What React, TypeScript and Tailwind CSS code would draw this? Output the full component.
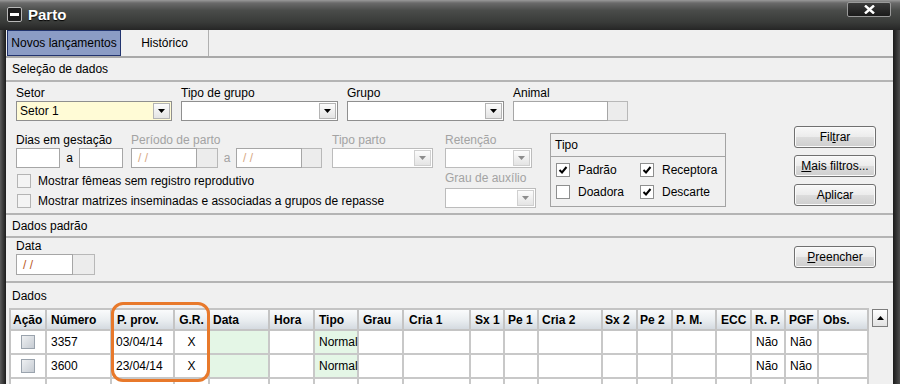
import React from "react"

function Arrow({ disabled = false }: { disabled?: boolean }) {
  return (
    <svg width="7" height="4" viewBox="0 0 7 4">
      <polygon points="0,0 7,0 3.5,4" fill={disabled ? "#8c8c8c" : "#000"} />
    </svg>
  )
}

function Label({ children, grey = false }: { children: React.ReactNode; grey?: boolean }) {
  return <div className={`h-[15px] leading-[15px] whitespace-nowrap ${grey ? "text-[#a3a3a3]" : "text-black"}`}>{children}</div>
}

function Combo({ className = "", value = "", disabled = false, yellow = false }: { className?: string; value?: string; disabled?: boolean; yellow?: boolean }) {
  return (
    <div className={`${className} h-[20px] flex border ${disabled ? "border-[#bcbcbc]" : "border-[#8f8f8f]"} ${yellow ? "bg-[#fffbd6]" : "bg-white"}`}>
      <div className="flex-1 pl-[3px] leading-[18px] whitespace-nowrap">{value}</div>
      <div className={`m-[1px] w-[17px] border ${disabled ? "border-[#d0d0d0]" : "border-[#b4b4b4]"} bg-gradient-to-b from-[#fcfcfc] to-[#e4e4e4] flex items-center justify-center`}>
        <Arrow disabled={disabled} />
      </div>
    </div>
  )
}

function DateField({ inputW, btnW, h = "h-[20px]", disabled = false }: { inputW: string; btnW: string; h?: string; disabled?: boolean }) {
  return (
    <div className={`flex ${h}`}>
      <div className={`${inputW} border border-[#a6a6a6] bg-white pl-[6px] flex items-center ${disabled ? "text-[#d8a884]" : "text-[#b8581d]"}`}>/ /</div>
      <div className={`${btnW} border border-l-0 border-[#b8b8b8] bg-[#ececec]`} />
    </div>
  )
}

function Check({ checked = false, grey = false }: { checked?: boolean; grey?: boolean }) {
  return (
    <div className={`w-[14px] h-[14px] border flex items-center justify-center ${grey ? "border-[#b4b4b4] bg-[#f4f4f4]" : "border-[#8e8f8f] bg-white"}`}>
      {checked && (
        <svg width="10" height="10" viewBox="0 0 10 10">
          <path d="M1.5 5 L4 7.5 L8.5 2" stroke="#000" strokeWidth="2" fill="none" />
        </svg>
      )}
    </div>
  )
}

function Btn({ children }: { children: React.ReactNode }) {
  return (
    <div className="w-[82px] h-[22px] rounded-[3px] border border-[#707070] bg-[linear-gradient(#f8f8f8_0%,#ececec_48%,#dcdcdc_52%,#cecece_100%)] shadow-[inset_0_0_0_1px_#fbfbfb] flex items-center justify-center leading-none">
      {children}
    </div>
  )
}

const cols = [
  { label: "Ação", cls: "pl-[2px]" },
  { label: "Número", cls: "pl-[4px]" },
  { label: "P. prov.", cls: "pl-[5px]" },
  { label: "G.R.", cls: "justify-center" },
  { label: "Data", cls: "pl-[3px]" },
  { label: "Hora", cls: "pl-[4px]" },
  { label: "Tipo", cls: "pl-[4px]" },
  { label: "Grau", cls: "pl-[4px]" },
  { label: "Cria 1", cls: "pl-[5px]" },
  { label: "Sx 1", cls: "pl-[4px]" },
  { label: "Pe 1", cls: "pl-[3px]" },
  { label: "Cria 2", cls: "pl-[3px]" },
  { label: "Sx 2", cls: "pl-[2px]" },
  { label: "Pe 2", cls: "pl-[2px]" },
  { label: "P. M.", cls: "pl-[3px]" },
  { label: "ECC", cls: "pl-[4px]" },
  { label: "R. P.", cls: "pl-[3px]" },
  { label: "PGF", cls: "pl-[3px]" },
  { label: "Obs.", cls: "pl-[4px]" },
]

const rows = [
  ["", "3357", "03/04/14", "X", "", "", "Normal", "", "", "", "", "", "", "", "", "", "Não", "Não", ""],
  ["", "3600", "23/04/14", "X", "", "", "Normal", "", "", "", "", "", "", "", "", "", "Não", "Não", ""],
  ["", "", "", "", "", "", "", "", "", "", "", "", "", "", "", "", "", "", ""],
]

function DataTable() {
  return (
    <div className="flex">
      <div className="ml-[3px] border-l-2 border-t-2 border-[#c4c4c4] grid grid-cols-[36px_65px_63px_35px_60px_45px_44px_45px_67px_34px_34px_64px_35px_35px_44px_35px_34px_33px_50px]">
        {cols.map((c) => (
          <div key={c.label} className={`h-[21px] border-r-2 border-b-2 border-[#c4c4c4] bg-[linear-gradient(#fafbfc,#e9edf0_55%,#d4dae0)] font-bold flex items-center whitespace-nowrap ${c.cls}`}>
            {c.label}
          </div>
        ))}
        {rows.map((r, ri) =>
          r.map((v, ci) => (
            <div
              key={ri + "-" + ci}
              className={`h-[24px] border-r-2 border-b-2 border-[#c8c8c8] flex items-center whitespace-nowrap ${ci === 4 || ci === 6 ? (ri < 2 ? "bg-[#e4f6e6]" : "bg-white") : "bg-white"} ${ci === 3 || ci === 0 ? "justify-center" : "pl-[4px]"}`}
            >
              {ci === 0 && ri < 2 ? (
                <div className="w-[14px] h-[14px] border border-[#9aa3ad] bg-gradient-to-br from-[#eef0f2] to-[#c6ccd3]" />
              ) : (
                v
              )}
            </div>
          ))
        )}
      </div>
      <div className="flex-1 pl-[3px] pt-[1px]">
        <div className="w-[16px] h-[18px] border border-[#7c7c7c] bg-gradient-to-b from-[#ffffff] to-[#e2e2e2] flex items-center justify-center">
          <svg width="7" height="4" viewBox="0 0 7 4">
            <polygon points="0,4 7,4 3.5,0" fill="#000" />
          </svg>
        </div>
      </div>
    </div>
  )
}

export default function App() {
  return (
    <div className="w-[900px] h-[384px] overflow-hidden bg-[#2e2e2e] flex flex-col font-['Liberation_Sans',Arial,sans-serif] text-[12px] text-black">
      {/* title bar */}
      <div className="h-[30px] shrink-0 flex items-start justify-between bg-[linear-gradient(#9a9a9a_0%,#6a6a6a_10%,#4a4c4a_35%,#383a38_75%,#262626_100%)]">
        <div className="ml-[7px] mt-[7px] flex items-center gap-[6px]">
          <div className="w-[15px] h-[15px] rounded-[2px] border border-[#b8b8b8] bg-[#1c1c1c] flex items-center justify-center">
            <div className="w-[9px] h-[3px] bg-white" />
          </div>
          <span className="text-white font-bold text-[15px] leading-none [text-shadow:0_1px_1px_#000]">Parto</span>
        </div>
        <div className="mt-[2px] mr-[9px] w-[44px] h-[15px] rounded-[2px] border border-[#9a9a9a] bg-gradient-to-b from-[#3a3a3a] to-[#1a1a1a] flex items-center justify-center">
          <svg width="11" height="9" viewBox="0 0 11 9">
            <path d="M1 0.5 L10 8.5 M10 0.5 L1 8.5" stroke="#fff" strokeWidth="2.4" />
          </svg>
        </div>
      </div>

      <div className="flex-1 flex min-h-0">
        <div className="w-[6px] bg-gradient-to-r from-[#5c5c5c] to-[#1c1c1c]" />
        <div className="w-[887px] bg-[#f0f0f0] flex flex-col relative">
          {/* tabs */}
          <div className="h-[28px] shrink-0 flex border-b-2 border-[#a9a9a9]">
            <div className="ml-[1px] w-[114px] h-full bg-[#8b9cc5] border border-[#22346f] flex items-center justify-center whitespace-nowrap">
              Novos lançamentos
            </div>
            <div className="w-[88px] h-full border-r border-[#b0b0b0] flex items-center justify-center">Histórico</div>
          </div>

          {/* Seleção de dados */}
          <div className="h-[24px] shrink-0 border-b-2 border-[#b4b4b4] flex items-center pl-[6px]">Seleção de dados</div>

          <div className="h-[133px] shrink-0 border-b-2 border-[#b4b4b4] flex">
            <div className="flex flex-col pl-[10px] pt-[4px]">
              <div className="flex gap-[9px]">
                <div>
                  <Label>Setor</Label>
                  <Combo className="w-[156px]" value="Setor 1" yellow />
                </div>
                <div>
                  <Label>Tipo de grupo</Label>
                  <Combo className="w-[157px]" />
                </div>
                <div>
                  <Label>Grupo</Label>
                  <Combo className="w-[157px]" />
                </div>
                <div>
                  <Label>Animal</Label>
                  <div className="flex h-[20px]">
                    <div className="w-[95px] border border-[#a6a6a6] bg-white" />
                    <div className="w-[20px] border border-l-0 border-[#b8b8b8] bg-[#ececec]" />
                  </div>
                </div>
              </div>

              <div className="flex mt-[12px]">
                <div className="w-[417px]">
                  <div className="flex">
                    <div className="w-[115px]">
                      <Label>Dias em gestação</Label>
                      <div className="flex h-[20px] items-center">
                        <div className="w-[44px] h-full border border-[#a6a6a6] bg-white" />
                        <span className="w-[19px] text-center">a</span>
                        <div className="w-[44px] h-full border border-[#a6a6a6] bg-white" />
                      </div>
                    </div>
                    <div className="w-[201px]">
                      <Label grey>Período de parto</Label>
                      <div className="flex items-center">
                        <DateField inputW="w-[66px]" btnW="w-[21px]" disabled />
                        <span className="w-[18px] text-center text-[#a3a3a3]">a</span>
                        <DateField inputW="w-[66px]" btnW="w-[20px]" disabled />
                      </div>
                    </div>
                    <div>
                      <Label grey>Tipo parto</Label>
                      <Combo className="w-[101px]" disabled />
                    </div>
                  </div>
                  <div className="mt-[3px]">
                    <div className="h-[20px] flex items-center gap-[7px] pl-[1px]">
                      <Check grey />
                      <span>Mostrar fêmeas sem registro reprodutivo</span>
                    </div>
                    <div className="h-[20px] flex items-center gap-[7px] pl-[1px]">
                      <Check grey />
                      <span className="whitespace-nowrap">Mostrar matrizes inseminadas e associadas a grupos de repasse</span>
                    </div>
                  </div>
                </div>

                <div className="ml-[12px] w-[91px]">
                  <Label grey>Retenção</Label>
                  <Combo className="w-[87px]" disabled />
                  <div className="mt-[3px]">
                    <Label grey>Grau de auxílio</Label>
                  </div>
                  <Combo className="w-[91px] mt-[2px]" disabled />
                </div>

                <div className="ml-[14px] w-[176px] h-[74px] border border-[#a3a3a3]">
                  <div className="h-[23px] border-b border-[#a3a3a3] flex items-center pl-[4px]">Tipo</div>
                  <div className="pt-[2px] pl-[5px] grid grid-cols-[84px_1fr]">
                    <div className="h-[22px] flex items-center gap-[8px]">
                      <Check checked />
                      <span>Padrão</span>
                    </div>
                    <div className="h-[22px] flex items-center gap-[8px]">
                      <Check checked />
                      <span>Receptora</span>
                    </div>
                    <div className="h-[22px] flex items-center gap-[8px]">
                      <Check />
                      <span>Doadora</span>
                    </div>
                    <div className="h-[22px] flex items-center gap-[8px]">
                      <Check checked />
                      <span>Descarte</span>
                    </div>
                  </div>
                </div>
              </div>
            </div>

            <div className="ml-auto mr-[17px] mt-[44px] flex flex-col gap-[7px]">
              <Btn>
                <span>
                  Fil<span className="underline">t</span>rar
                </span>
              </Btn>
              <Btn>
                <span>
                  <span className="underline">M</span>ais filtros...
                </span>
              </Btn>
              <Btn>Aplicar</Btn>
            </div>
          </div>

          {/* Dados padrão */}
          <div className="h-[23px] shrink-0 border-b-2 border-[#b4b4b4] flex items-center pl-[6px]">Dados padrão</div>
          <div className="h-[45px] shrink-0 border-b-2 border-[#b4b4b4] flex justify-between">
            <div className="pl-[10px] pt-[1px]">
              <Label>Data</Label>
              <DateField inputW="w-[57px]" btnW="w-[22px]" h="h-[21px]" />
            </div>
            <div className="pt-[8px] pr-[17px]">
              <Btn>
                <span>
                  <span className="underline">P</span>reencher
                </span>
              </Btn>
            </div>
          </div>

          {/* Dados */}
          <div className="h-[25px] shrink-0 flex items-center pl-[6px]">Dados</div>
          <DataTable />

          <div className="absolute left-[105px] top-[272px] w-[99px] h-[80px] rounded-[12px] border-[3px] border-[#e8792b] pointer-events-none" />
        </div>
        <div className="flex-1 bg-gradient-to-r from-[#1c1c1c] to-[#4e4e4e]" />
      </div>
    </div>
  )
}
